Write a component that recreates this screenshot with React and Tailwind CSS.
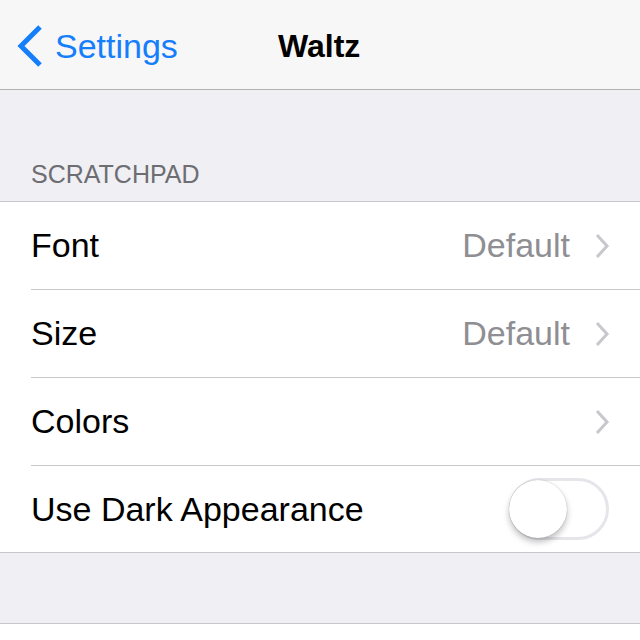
import React from "react";

const Chevron = () => (
    <svg width="16" height="26" viewBox="0 0 16 26" className="ml-[24px]">
        <path d="M3 2 L13 13 L3 24" fill="none" stroke="#c7c7cc" strokeWidth="3" />
    </svg>
);

const Row = ({ label, value, last, children }) => (
    <div className={`flex items-stretch pl-[31px] ${last ? "h-[86px]" : "h-[88px]"}`}>
        <div className={`flex flex-1 items-center pr-[30px] ${last ? "" : "border-b border-[#c8c7cc]"}`}>
            <span className="flex-1 text-[34px] text-black">{label}</span>
            {value && <span className="text-[34px] text-[#8e8e93]">{value}</span>}
            {children}
        </div>
    </div>
);

const Toggle = () => (
    <div className="relative mr-[1px] h-[62px] w-[100px] rounded-full border-[3px] border-[#e5e5ea] bg-white">
        <div className="absolute left-[-3px] top-[-1px] h-[58px] w-[58px] rounded-full bg-white shadow-[0_4px_6px_rgba(0,0,0,0.25),0_0_1px_rgba(0,0,0,0.3)]" />
    </div>
);

export default function App() {
    return (
        <div className="h-[640px] w-[640px] overflow-hidden bg-[#efeff4] font-['Liberation_Sans',Arial,sans-serif]">
            <div className="relative flex h-[90px] items-center border-b border-[#b2b2b2] bg-[#f7f7f7] pt-[3px]">
                <div className="flex items-center pl-[17px] text-[#157efb]">
                    <svg width="26" height="42" viewBox="0 0 26 42">
                        <path d="M23 2 L4 21 L23 40" fill="none" stroke="#157efb" strokeWidth="5" />
                    </svg>
                    <span className="ml-[12px] text-[34px]">Settings</span>
                </div>
                <div className="absolute left-[278px] top-0 flex h-full items-center pt-[3px] text-[32px] font-bold text-black">
                    Waltz
                </div>
            </div>
            <div className="h-[111px] pl-[31px] pt-[72px] text-[25px] leading-none text-[#6d6d72]">SCRATCHPAD</div>
            <div className="border-y border-[#c8c7cc] bg-white">
                <Row label="Font" value="Default">
                    <Chevron />
                </Row>
                <Row label="Size" value="Default">
                    <Chevron />
                </Row>
                <Row label="Colors">
                    <Chevron />
                </Row>
                <Row label="Use Dark Appearance" last>
                    <Toggle />
                </Row>
            </div>
            <div className="h-[70px]" />
            <div className="h-[40px] border-t border-[#c8c7cc] bg-white" />
        </div>
    );
}
